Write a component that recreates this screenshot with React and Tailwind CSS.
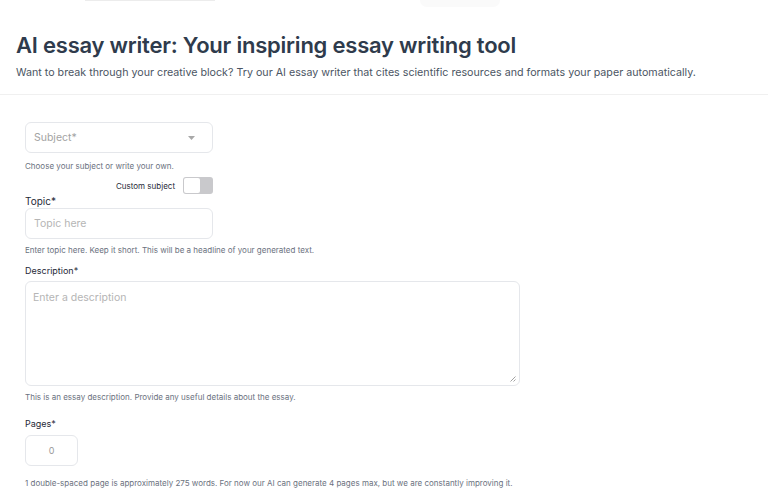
function Toggle() {
  return (
    <div className="flex h-[17px] w-[30px] items-center rounded-[3px] bg-[#c9c9cc] p-px">
      <div className="h-[15px] w-[16px] rounded-[2px] bg-white" />
    </div>
  )
}

function Helper({ children, className = '' }) {
  return (
    <p className={`text-[8px] leading-[12px] text-[#6b7280] ${className}`}>{children}</p>
  )
}

function App() {
  return (
    <div className="min-h-[494px] bg-white font-['Inter',sans-serif] text-[#334155]">
      <div className="flex h-[8px]">
        <div className="ml-[85px] h-px w-[130px] bg-[#ececec]" />
        <div className="ml-auto mr-[268px] h-[7px] w-[80px] rounded-b-full bg-[#fafafa]" />
      </div>

      <header className="border-b border-[#f0f0f0] px-4 pb-[12px]">
        <h1 className="mt-[23px] text-[22px] font-semibold leading-[28px] tracking-[-0.01em] text-[#2f3b4c]">
          AI essay writer: Your inspiring essay writing tool
        </h1>
        <p className="mt-[5px] text-[10.7px] leading-[18px] text-[#4b5563]">
          Want to break through your creative block? Try our AI essay writer that cites scientific resources and formats your paper automatically.
        </p>
      </header>

      <form className="px-[25px] pt-[27px]">
        <div className="flex h-[31px] w-[188px] items-center justify-between rounded-[6px] border border-[#e5e7eb] pl-[8px] pr-[17px]">
          <span className="text-[10.5px] text-[#a3a3a3]">Subject*</span>
          <svg width="7" height="4" viewBox="0 0 7 4" className="fill-[#a8a8a8]">
            <path d="M0 0h7L3.5 4z" />
          </svg>
        </div>
        <Helper className="mt-[7px]">Choose your subject or write your own.</Helper>

        <div className="mt-[5px] flex w-[188px] items-center justify-end gap-[8px]">
          <span className="text-[8px] text-[#1f2937]">Custom subject</span>
          <Toggle />
        </div>

        <label className="block text-[10px] leading-[14px] text-[#1f2937]">Topic*</label>
        <div className="flex h-[31px] w-[188px] items-center rounded-[6px] border border-[#e5e7eb] px-[8px]">
          <span className="text-[10.5px] text-[#b5b5b5]">Topic here</span>
        </div>
        <Helper className="mt-[5px]">
          Enter topic here. Keep it short. This will be a headline of your generated text.
        </Helper>

        <label className="mt-[9px] block text-[9px] leading-[12px] text-[#1f2937]">Description*</label>
        <div className="relative mt-[4px] h-[105px] w-[495px] rounded-[6px] border border-[#e5e7eb] px-[7px] pt-[8px] text-[10.5px] leading-[16px] text-[#b5b5b5]">
          Enter a description
          <svg width="7" height="7" viewBox="0 0 7 7" className="absolute bottom-[3px] right-[3px] stroke-[#8a8a8a]">
            <path d="M6.5 1.5l-5 5M6.5 4.5l-2 2" strokeWidth="0.8" />
          </svg>
        </div>
        <Helper className="mt-[5px]">
          This is an essay description. Provide any useful details about the essay.
        </Helper>

        <label className="mt-[15px] block text-[9px] leading-[12px] text-[#1f2937]">Pages*</label>
        <div className="mt-[5px] flex h-[31px] w-[53px] items-center justify-center rounded-[6px] border border-[#e5e7eb]">
          <span className="text-[9px] text-[#9a9a9a]">0</span>
        </div>
        <Helper className="mt-[11px]">
          1 double-spaced page is approximately 275 words. For now our AI can generate 4 pages max, but we are constantly improving it.
        </Helper>
      </form>
    </div>
  )
}

export default App
